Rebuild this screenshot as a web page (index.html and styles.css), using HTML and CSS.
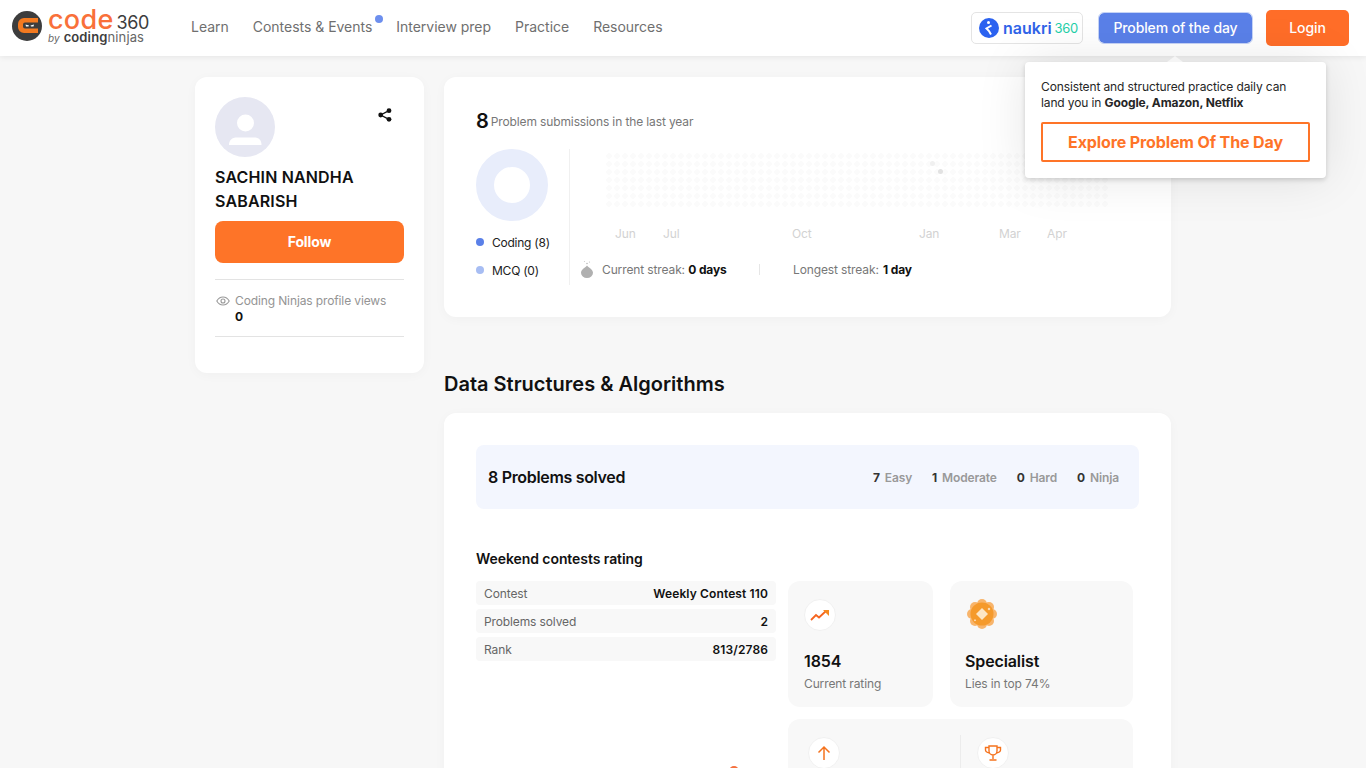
FILE: index.html
```html
<!DOCTYPE html>
<html>
<head>
<meta name="viewport" content="width=device-width, initial-scale=1">
<title>Profile</title>
<link rel="stylesheet" href="styles.css">
</head>
<body>

<header class="topbar">
  <a class="logo">
    <svg class="logo-mark" width="30" height="30" viewBox="0 0 30 30">
      <circle cx="15" cy="15" r="15" fill="#3d3d3d"/>
      <path d="M26 7H12a6 6 0 0 0-6 6v3a6 6 0 0 0 6 6h14v-4.500H13a2 2 0 0 1-2-2v-2a2 2 0 0 1 2-2h13z" fill="#f47a20"/>
      <path d="M13.500 13.500l3.500 1-.5 1h-2.500zM22 13.500l-3.500 1 .5 1h2.500z" fill="#fff"/>
    </svg>
    <span class="logo-text">
      <span class="logo-top"><b>code</b><i>360</i></span>
      <span class="logo-sub"><em>by</em> <b>coding</b>ninjas</span>
    </span>
  </a>
  <nav class="nav">
    <a>Learn</a>
    <a class="has-dot">Contests &amp; Events</a>
    <a>Interview prep</a>
    <a>Practice</a>
    <a>Resources</a>
  </nav>
  <div class="top-actions">
    <a class="naukri">
      <svg width="20" height="20" viewBox="0 0 20 20">
        <circle cx="10" cy="10" r="10" fill="#2b62f0"/>
        <circle cx="9.500" cy="4.500" r="1.500" fill="#fff"/>
        <path d="M12.500 7.500 7.500 10.500l2.500 2.500 2 3.500" fill="none" stroke="#fff" stroke-width="2"/>
      </svg>
      <b>naukri</b><span>360</span>
    </a>
    <a class="btn-pod">Problem of the day</a>
    <a class="btn-login">Login</a>
  </div>
  <div class="pod-tip">
    <p>Consistent and structured practice daily can land you in <b>Google, Amazon, Netflix</b></p>
    <a class="pod-explore">Explore Problem Of The Day</a>
  </div>
</header>

<main class="page">
  <aside class="card profile">
    <div class="profile-head">
      <div class="avatar">
        <svg width="60" height="60" viewBox="0 0 60 60">
          <circle cx="30" cy="30" r="30" fill="#e6e7f2"/>
          <circle cx="30.500" cy="26" r="8.500" fill="#fff"/>
          <path d="M14 48c0-5 3-7.500 8-7.500h17c5 0 7.500 2.500 7.500 7.500z" fill="#fff"/>
        </svg>
      </div>
      <svg class="share" width="14" height="14" viewBox="0 0 14 14">
        <circle cx="11" cy="2.700" r="2.400" fill="#111"/>
        <circle cx="2.700" cy="7" r="2.400" fill="#111"/>
        <circle cx="11" cy="11.300" r="2.400" fill="#111"/>
        <path d="M11 2.700 2.700 7l8.300 4.300" fill="none" stroke="#111" stroke-width="1.300"/>
      </svg>
    </div>
    <h1 class="name">SACHIN NANDHA SABARISH</h1>
    <a class="btn-follow">Follow</a>
    <div class="views">
      <svg width="14" height="10" viewBox="0 0 14 10">
        <path d="M.8 5C2.300 2.300 4.400 1 7 1s4.700 1.300 6.200 4C11.700 7.700 9.600 9 7 9S2.300 7.700.8 5z" fill="none" stroke="#999" stroke-width="1.100"/>
        <circle cx="7" cy="5" r="2" fill="none" stroke="#999" stroke-width="1.100"/>
      </svg>
      <div class="views-text">
        <span>Coding Ninjas profile views</span>
        <b>0</b>
      </div>
    </div>
  </aside>

  <section class="content">
    <div class="card stats">
      <div class="stats-title"><b>8</b> Problem submissions in the last year</div>
      <div class="stats-body">
        <div class="donut-col">
          <div class="donut"></div>
          <div class="legend"><i class="dot-coding"></i>Coding (8)</div>
          <div class="legend"><i class="dot-mcq"></i>MCQ (0)</div>
        </div>
        <div class="heatmap">
          <div class="heat-grid">
            <i class="heat-a"></i>
            <i class="heat-b"></i>
          </div>
          <div class="months">
            <span>Jun</span><span>Jul</span><span>Oct</span><span>Jan</span><span>Mar</span><span>Apr</span>
          </div>
          <div class="streaks">
            <svg width="14" height="18" viewBox="0 0 14 18">
              <path d="M7 5.500c.5 1.500 6 3.500 6 7.300a6 5.200 0 0 1-12 0c0-3.800 5.500-5.800 6-7.300z" fill="#b0b0b0"/>
              <circle cx="7" cy="3.500" r=".8" fill="#bbb"/>
              <circle cx="4.500" cy="1.500" r=".6" fill="#ccc"/>
              <circle cx="9.500" cy="2" r=".6" fill="#bbb"/>
            </svg>
            <span class="streak-now">Current streak: <b>0 days</b></span>
            <i class="streak-sep"></i>
            <span>Longest streak: <b class="streak-best">1 day</b></span>
          </div>
        </div>
      </div>
    </div>

    <h2 class="section-title">Data Structures &amp; Algorithms</h2>

    <div class="card dsa">
      <div class="solved">
        <b>8 Problems solved</b>
        <div class="levels">
          <span><b>7</b> Easy</span>
          <span><b>1</b> Moderate</span>
          <span><b>0</b> Hard</span>
          <span><b>0</b> Ninja</span>
        </div>
      </div>

      <h3 class="contest-title">Weekend contests rating</h3>
      <div class="contest">
        <div class="contest-left">
          <div class="row"><span>Contest</span><b>Weekly Contest 110</b></div>
          <div class="row"><span>Problems solved</span><b>2</b></div>
          <div class="row"><span>Rank</span><b>813/2786</b></div>
          <i class="graph-point"></i>
        </div>
        <div class="contest-right">
          <div class="tile tile-rating">
            <div class="tile-icon">
              <svg width="20" height="12" viewBox="0 0 20 12">
                <path d="M1 11l5-5 3 2.500L16 2" fill="none" stroke="#f5641e" stroke-width="1.800"/>
                <path d="M13 1h6v6z" fill="#f58a1f"/>
              </svg>
            </div>
            <b>1854</b>
            <span>Current rating</span>
          </div>
          <div class="tile tile-level">
            <svg class="badge" width="30" height="30" viewBox="0 0 30 30">
              <g fill="#f8b56c">
                <circle cx="15" cy="5" r="5"/>
                <circle cx="22" cy="8" r="5"/>
                <circle cx="25" cy="15" r="5"/>
                <circle cx="22" cy="22" r="5"/>
                <circle cx="15" cy="25" r="5"/>
                <circle cx="8" cy="22" r="5"/>
                <circle cx="5" cy="15" r="5"/>
                <circle cx="8" cy="8" r="5"/>
              </g>
              <circle cx="15" cy="15" r="11.500" fill="#f59a2c"/>
              <path d="M15 9l6 6-6 6-6-6z" fill="#fde6c6"/>
              <path d="M22 8.500l.5 1 1 .5-1 .5-.5 1-.5-1-1-.5 1-.5zM8 20l.4.8.8.4-.8.4-.4.8-.4-.8-.8-.4.8-.4z" fill="#fff"/>
            </svg>
            <b>Specialist</b>
            <span>Lies in top 74%</span>
          </div>
          <div class="tile tile-wide">
            <div class="tile-half">
              <div class="tile-icon">
                <svg width="16" height="16" viewBox="0 0 16 16">
                  <path d="M8 15V2M2.500 7.500 8 2l5.500 5.500" fill="none" stroke="#f5731e" stroke-width="1.500"/>
                </svg>
              </div>
            </div>
            <div class="tile-half tile-half-r">
              <div class="tile-icon">
                <svg width="18" height="16" viewBox="0 0 18 16">
                  <path d="M5 1h8v5a4 4 0 0 1-8 0zM5 2.500H1.500V5c0 1.500 1.500 2.500 4 3M13 2.500h3.500V5c0 1.500-1.500 2.500-4 3M9 10v4M5.500 15h7" fill="none" stroke="#f5731e" stroke-width="1.400"/>
                </svg>
              </div>
            </div>
          </div>
        </div>
      </div>
    </div>
  </section>
</main>

</body>
</html>
```

FILE: styles.css
```css
* {
  box-sizing: border-box;
}

html, body {
  height: 768px;
  overflow: hidden;
}

body {
  margin: 0;
  background: #f7f7f7;
  color: #111;
  font-family: Inter, "Open Sans", sans-serif;
  font-size: 12px;
  letter-spacing: -0.01em;
}

a {
  text-decoration: none;
}

b {
  font-weight: 700;
}

/* top bar */
.topbar {
  position: relative;
  z-index: 5;
  display: flex;
  align-items: center;
  height: 56px;
  padding: 0 17px 0 12px;
  background: #fff;
  box-shadow: 0 1px 6px rgba(0, 0, 0, 0.08);
}

.logo {
  display: flex;
  align-items: center;
  gap: 6px;
  width: 179px;
  margin-top: -4px;
}

.logo-text {
  display: flex;
  flex-direction: column;
}

.logo-top {
  display: block;
  height: 22px;
  line-height: 22px;
}

.logo-top b,
.logo-top i {
  display: inline-block;
  height: 22px;
  line-height: 22px;
}

.logo-top b {
  color: #f9703a;
  font-size: 27px;
  font-weight: 500;
  letter-spacing: 0.01em;
}

.logo-top i {
  margin-left: 3px;
  color: #3d3d3d;
  font-size: 18px;
  font-style: normal;
  letter-spacing: -0.02em;
}

.logo-sub {
  display: block;
  height: 13px;
  color: #666;
  font-size: 13px;
  line-height: 13px;
  letter-spacing: 0.01em;
}

.logo-sub em,
.logo-sub b {
  display: inline-block;
  height: 13px;
  line-height: 13px;
}

.logo-sub em {
  font-size: 10px;
}

.logo-sub b {
  color: #3d3d3d;
  font-weight: 600;
}

.nav {
  display: flex;
  gap: 24px;
  margin-top: -4px;
}

.nav a {
  position: relative;
  color: #6f6f6f;
  font-size: 14px;
  letter-spacing: -0.02px;
}

.has-dot::after {
  content: "";
  position: absolute;
  top: -3px;
  right: -11px;
  width: 8px;
  height: 8px;
  border-radius: 50%;
  background: #6d8fee;
}

.top-actions {
  display: flex;
  align-items: center;
  margin-left: auto;
}

.naukri {
  display: flex;
  align-items: center;
  width: 112px;
  height: 32px;
  padding-left: 7px;
  border: 1px solid #e4e4e4;
  border-radius: 5px;
}

.naukri svg {
  margin-right: 4px;
}

.naukri b {
  color: #2f63e8;
  font-size: 16px;
  font-weight: 600;
  letter-spacing: 0;
}

.naukri span {
  margin-left: 3px;
  color: #1fcfa8;
  font-size: 13px;
  letter-spacing: -0.03em;
}

.btn-pod {
  width: 153px;
  height: 30px;
  margin-left: 16px;
  border: 2px solid #5a80e8;
  border-radius: 5px;
  outline: 1px solid #c5d3f6;
  background: #5a80e8;
  color: #fff;
  font-size: 14px;
  font-weight: 500;
  line-height: 26px;
  text-align: center;
}

.btn-login {
  width: 83px;
  height: 36px;
  margin-left: 14px;
  border-radius: 5px;
  background: #ff6d28;
  color: #fff;
  font-size: 14px;
  font-weight: 500;
  line-height: 36px;
  text-align: center;
}

.pod-tip {
  position: absolute;
  top: 62px;
  left: 1025px;
  width: 301px;
  height: 116px;
  padding: 17px 16px;
  border-radius: 4px;
  background: #fff;
  box-shadow: 0 2px 5px rgba(0, 0, 0, 0.16), 0 0 50px rgba(0, 0, 0, 0.1);
}

.pod-tip::before {
  content: "";
  position: absolute;
  top: -6px;
  left: 142px;
  border-right: 8px solid transparent;
  border-bottom: 6px solid #f5f5f5;
  border-left: 8px solid transparent;
}

.pod-tip p {
  width: 256px;
  margin: 0;
  color: #262626;
  font-size: 12px;
  line-height: 16px;
}

.pod-explore {
  display: block;
  height: 40px;
  margin-top: 11px;
  border: 2px solid #fe7428;
  border-radius: 2px;
  color: #fe7428;
  font-size: 16px;
  font-weight: 700;
  line-height: 36px;
  text-align: center;
}

/* page */
.page {
  display: grid;
  grid-template-columns: 229px 727px;
  gap: 20px;
  width: 976px;
  margin: 21px 0 0 195px;
}

.card {
  border-radius: 12px;
  background: #fff;
  box-shadow: 0 2px 12px rgba(0, 0, 0, 0.03);
}

.profile {
  align-self: start;
  height: 296px;
  padding: 20px;
}

.profile-head {
  display: flex;
  justify-content: space-between;
  height: 60px;
}

.avatar {
  width: 60px;
  height: 60px;
}

.share {
  margin: 11px 12px 0 0;
}

.name {
  margin: 8px 0 8px;
  font-size: 16px;
  font-weight: 600;
  line-height: 24px;
  letter-spacing: 0.01em;
}

.btn-follow {
  display: block;
  height: 42px;
  border-radius: 8px;
  background: #fe7428;
  color: #fff;
  font-size: 14px;
  font-weight: 700;
  line-height: 42px;
  text-align: center;
}

.views {
  display: flex;
  gap: 5px;
  height: 58px;
  margin-top: 16px;
  padding-top: 13px;
  border-top: 1px solid #e3e3e3;
  border-bottom: 1px solid #e3e3e3;
}

.views svg {
  flex: none;
  margin: 3px 0 0 1px;
}

.views-text {
  display: flex;
  flex-direction: column;
  color: #949494;
  line-height: 16px;
}

.views-text b {
  color: #111;
}

.content {
  min-width: 0;
}

.stats {
  height: 240px;
  padding: 32px 32px 0;
}

.stats-title {
  display: flex;
  align-items: center;
  gap: 2px;
  height: 24px;
  color: #777;
}

.stats-title b {
  color: #111;
  font-size: 20px;
  font-weight: 600;
  line-height: 24px;
}

.stats-body {
  display: flex;
  margin-top: 16px;
}

.donut-col {
  width: 94px;
  height: 136px;
  border-right: 1px solid #f0f0f0;
}

.donut {
  width: 72px;
  height: 72px;
  margin-bottom: 7px;
  border: 18px solid #e8edfb;
  border-radius: 50%;
}

.legend {
  display: flex;
  align-items: center;
  height: 28px;
  color: #222;
  letter-spacing: -0.02em;
}

.legend i {
  width: 8px;
  height: 8px;
  margin-right: 8px;
  border-radius: 50%;
}

.dot-coding {
  background: #5a80e8;
}

.dot-mcq {
  background: #a7bdf3;
}

.heatmap {
  position: relative;
  flex: 1;
  padding-left: 10px;
}

.heat-grid {
  position: relative;
  width: 504px;
  height: 56px;
  margin: 3px 0 0 25px;
  background-image: radial-gradient(circle, #fbfbfb 2.500px, transparent 3px);
  background-size: 8px 8px;
}

.heat-grid i {
  position: absolute;
  width: 5px;
  height: 5px;
  border-radius: 50%;
}

.heat-a {
  top: 9px;
  left: 325px;
  background: #f0f0f0;
}

.heat-b {
  top: 17px;
  left: 333px;
  background: #e2e2e2;
}

.months {
  display: grid;
  grid-template-columns: 48px 129px 127px 80px 48px auto;
  margin: 18px 0 0 35px;
  color: #d2d2d2;
  line-height: 16px;
}

.streaks {
  display: flex;
  align-items: center;
  height: 18px;
  margin-top: 18px;
  color: #777;
}

.streaks b {
  color: #111;
}

.streaks svg {
  margin-right: 8px;
}

.streak-now {
  width: 157px;
}

.streak-best {
  margin-left: 1px;
}

.streak-sep {
  width: 1px;
  height: 11px;
  margin-right: 33px;
  background: #e6e6e6;
}

.section-title {
  margin: 55px 0 17px;
  font-size: 20px;
  font-weight: 600;
  line-height: 24px;
  letter-spacing: 0;
}

.dsa {
  height: 600px;
  padding: 32px;
}

.solved {
  display: flex;
  align-items: center;
  justify-content: space-between;
  height: 64px;
  padding: 0 20px 0 12px;
  border-radius: 8px;
  background: #f3f6fe;
  font-size: 16px;
}

.solved > b {
  font-weight: 600;
  letter-spacing: -0.02em;
}

.levels {
  display: flex;
  gap: 20px;
  color: #999;
  font-size: 12px;
  font-weight: 600;
}

.levels b {
  margin-right: 2px;
  color: #333;
}

.contest-title {
  margin: 41px 0 13px;
  font-size: 14px;
  font-weight: 600;
  line-height: 18px;
  letter-spacing: -0.005em;
}

.contest {
  display: flex;
  gap: 12px;
}

.contest-left {
  position: relative;
  display: flex;
  flex-direction: column;
  gap: 4px;
  width: 300px;
}

.row {
  display: flex;
  justify-content: space-between;
  height: 24px;
  padding: 0 8px;
  border-radius: 4px;
  background: #f8f8f8;
  color: #666;
  line-height: 25px;
}

.row b {
  color: #111;
  font-weight: 600;
  letter-spacing: 0.01em;
}

.graph-point {
  position: absolute;
  top: 185px;
  left: 253px;
  width: 10px;
  height: 10px;
  border-radius: 50%;
  background: #f5713f;
}

.contest-right {
  display: grid;
  grid-template-columns: 145px 183px;
  grid-auto-rows: 126px;
  gap: 12px 17px;
}

.tile {
  display: flex;
  flex-direction: column;
  padding: 18px 16px;
  border-radius: 12px;
  background: #f8f8f8;
  color: #777;
}

.tile > b {
  margin-top: 18px;
  color: #111;
  font-size: 16px;
  font-weight: 600;
  line-height: 24px;
}

.tile > span {
  line-height: 22px;
}

.tile-level {
  padding-left: 15px;
}

.tile-icon {
  display: flex;
  flex: none;
  align-items: center;
  justify-content: center;
  width: 32px;
  height: 32px;
  border: 1px solid #f1f1f1;
  border-radius: 50%;
  background: #fff;
}

.badge {
  flex: none;
  margin: 0 0 2px 2px;
}

.tile-wide {
  grid-column: 1 / 3;
  flex-direction: row;
  padding: 18px 0 0 20px;
}

.tile-half {
  width: 152px;
}

.tile-half-r {
  height: 60px;
  margin-top: -2px;
  padding: 2px 0 0 16px;
  border-left: 1px solid #ececec;
}
```
